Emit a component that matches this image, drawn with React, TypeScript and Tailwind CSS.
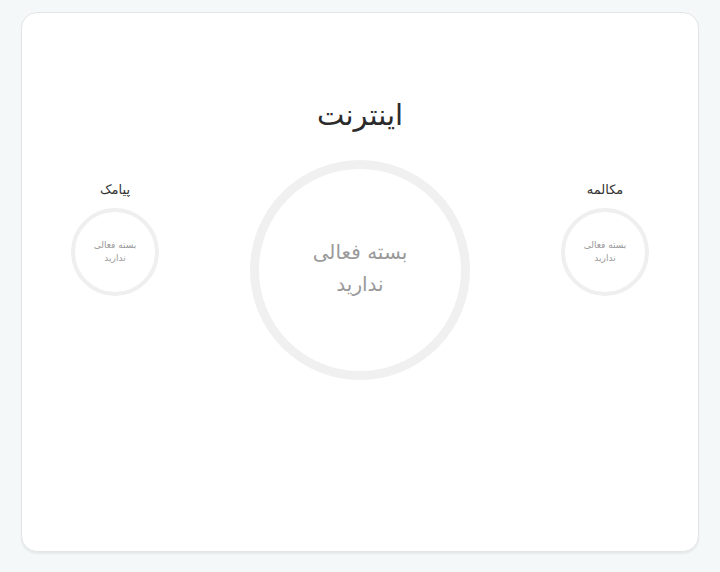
import React from 'react';

type Pack = {
  title: string;
};

function SmallPack({ title }: Pack) {
  return (
    <div className="flex flex-col items-center w-[88px] mt-[20px]">
      <div className="text-[13px] leading-[20px] text-[#333333]">{title}</div>
      <div className="mt-[8px] w-[88px] h-[88px] rounded-full border-4 border-[#efefef] flex flex-col items-center justify-center text-[9px] leading-[13px] text-[#9a9a9a]">
        <span>بسته فعالی</span>
        <span>ندارید</span>
      </div>
    </div>
  );
}

function App() {
  return (
    <div
      dir="rtl"
      className="w-[720px] h-[572px] bg-[#f4f8f8] pt-[12px] flex justify-center items-start"
      style={{ fontFamily: '"DejaVu Sans", "Noto Sans", sans-serif' }}
    >
      <div className="w-[678px] h-[540px] bg-white rounded-[16px] border border-[#e3e6e6] shadow-[0_2px_2px_rgba(0,0,0,0.06)] flex flex-col items-center pt-[82px]">
        <h1 className="text-[29px] leading-[40px] text-[#2b2b2b]">اینترنت</h1>
        <div className="w-full flex justify-between items-start px-[49px] mt-[25px]">
          <SmallPack title="مکالمه" />
          <div className="w-[220px] h-[220px] rounded-full border-[9px] border-[#f0f0f0] flex flex-col items-center justify-center text-[20px] leading-[32px] text-[#9a9a9a] pb-[4px]">
            <span>بسته فعالی</span>
            <span>ندارید</span>
          </div>
          <SmallPack title="پیامک" />
        </div>
      </div>
    </div>
  );
}

export default App;
